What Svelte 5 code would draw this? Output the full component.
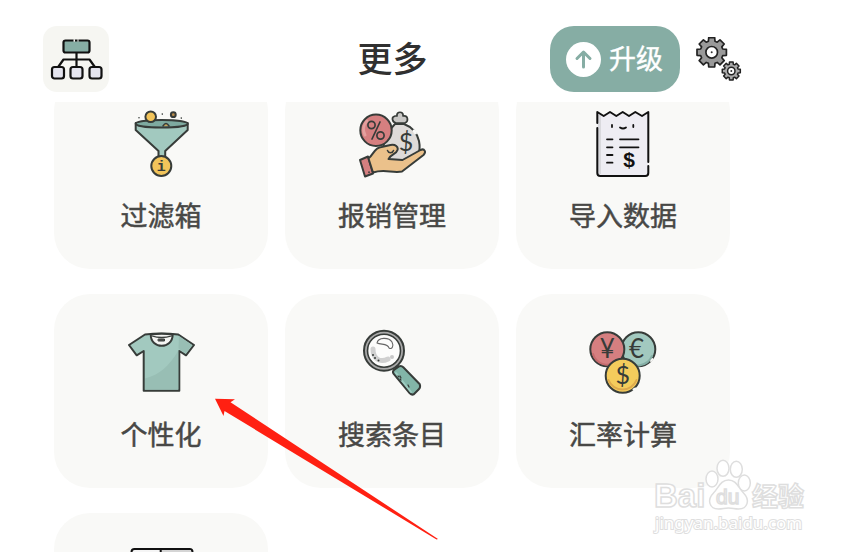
<script>
  // 功能卡片列表
  const items = [
    { icon: 'filter', label: '过滤箱' },
    { icon: 'expense', label: '报销管理' },
    { icon: 'import', label: '导入数据' },
    { icon: 'shirt', label: '个性化' },
    { icon: 'search', label: '搜索条目' },
    { icon: 'rate', label: '汇率计算' },
    { icon: 'book', label: '' },
  ];

  // 生成齿轮轮廓
  function gear(cx, cy, outer, inner) {
    const teeth = 8;
    const step = (Math.PI * 2) / teeth;
    const points = [];
    for (let i = 0; i < teeth; i++) {
      const a = i * step - Math.PI / 2;
      for (const [offset, r] of [[-0.29, inner], [-0.2, outer], [0.2, outer], [0.29, inner]]) {
        points.push(`${(cx + Math.cos(a + offset) * r).toFixed(2)} ${(cy + Math.sin(a + offset) * r).toFixed(2)}`);
      }
    }
    return `M${points.join('L')}Z`;
  }
</script>

<main class="screen">
  <!-- 顶部栏 -->
  <header class="topbar">
    <button class="tree" aria-label="分类">
      <svg viewBox="0 0 66 66" fill="none" stroke="#111" stroke-width="2.2" stroke-linecap="round" stroke-linejoin="round">
        <rect x="20.5" y="14.5" width="26" height="12" rx="2" fill="#86ada4" />
        <path d="M30.5 14.5h1.5M34.5 14.5h1" stroke="#f6f6f2" stroke-width="2.6" stroke-linecap="butt" />
        <path d="M33.5 27v13M15.5 40.5l5-7h26l5 7" />
        <rect x="9" y="41" width="12" height="11.5" rx="2.5" fill="#e4e4ee" />
        <rect x="27.5" y="41" width="12" height="11.5" rx="2.5" fill="#e4e4ee" />
        <rect x="46.5" y="41" width="12" height="11.5" rx="2.5" fill="#e4e4ee" />
      </svg>
    </button>
    <h1>更多</h1>
    <div class="actions">
      <button class="upgrade">
        <svg viewBox="0 0 35 35" fill="none">
          <circle cx="17.5" cy="17.5" r="17.5" fill="#fff" />
          <path d="M17.5 25V10.5M11 16.5l6.5-6.5 6.5 6.5" stroke="#86ada4" stroke-width="3" stroke-linecap="round" stroke-linejoin="round" />
        </svg>
        <span>升级</span>
      </button>
      <button class="settings" aria-label="设置">
        <svg viewBox="0 0 46 44" stroke="#222" stroke-linejoin="round">
          <path d={gear(15.7, 15.3, 15, 11.5)} fill="#999" stroke-width="1.7" />
          <circle cx="15.7" cy="15.3" r="5.8" fill="#fff" stroke-width="1.7" />
          <circle cx="15.7" cy="15.3" r="1" fill="#333" stroke="none" />
          <path d={gear(35.3, 34, 9.2, 7)} fill="#aaa" stroke-width="1.5" />
          <circle cx="35.3" cy="34" r="3.7" fill="#fff" stroke-width="1.5" />
          <circle cx="35.3" cy="34" r="1" fill="#333" stroke="none" />
        </svg>
      </button>
    </div>
  </header>

  <!-- 功能卡片 -->
  <section class="content">
    <div class="grid">
      {#each items as item}
        <button class="card" aria-label={item.label || '账本'}>
          <svg class="icon" viewBox="0 0 68 68" fill="none" stroke="#373c39" stroke-width="2" stroke-linecap="round" stroke-linejoin="round">
            {#if item.icon === 'filter'}
              <path d="M8.7 13v7l22.8 21v6h6.7v-6l22.5-21v-7z" fill="#a2c9bf" />
              <ellipse cx="34.7" cy="13.7" rx="26" ry="3.8" fill="#7eaaa0" />
              <path d="M36 16q3-5 6 0" fill="#c9a75a" stroke-width="1.5" />
              <circle cx="23.7" cy="6.7" r="5.3" fill="#f2c45a" />
              <circle cx="46.3" cy="4.7" r="2.4" fill="#b98c4b" />
              <path d="M12 7.7v.1M35.3 4v.1M54.3 8v.1" stroke-width="1.6" />
              <circle cx="34.3" cy="56" r="10" fill="#f2c45a" />
              <text class="glyph mono" x="34.3" y="61" font-size="15">i</text>
            {:else if item.icon === 'expense'}
              <path d="M38 13c-4-1-5-6-1-7 1 0 1 0 2 0-1-5 7-5 6 0 5-1 6 5 2 7z" fill="#c9c8c6" stroke-width="1.7" />
              <path d="M37 14h9c8 3 13 9 15 17 2 10-1 19-9 22H30c-7-5-8-24 7-39z" fill="#dedbd9" />
              <path d="M56 21l1.5 2" stroke="#f9f9f7" stroke-width="3" />
              <text class="glyph thin" x="48" y="41" font-size="25">$</text>
              <path d="M2 50l8-3.5 5 17-8 3z" fill="#d57f80" />
              <path d="M10.5 48.5c5-4 6-11 13-11.5l9-2c5-1 8 2 7 5-1 4-7 4-9 9l14 1 18-10c4-2 6 2 3 5L44 61.500c-10 2-17-3-29 1z" fill="#ebc18b" />
              <path d="M29.5 40.5c1 3 5 3 6 0" stroke-width="1.5" />
              <path d="M11 62v.5" stroke-width="1.6" />
              <circle cx="18" cy="20.3" r="15.7" fill="#d57f80" />
              <path d="M7 25A12 12 0 0 1 9 11" stroke="#e4a09e" stroke-width="3" />
              <circle cx="13.5" cy="15" r="3.6" stroke-width="1.7" />
              <circle cx="22.5" cy="25.5" r="3.6" stroke-width="1.7" />
              <path d="M22 12l-8 17" stroke-width="1.7" />
            {:else if item.icon === 'import'}
              <path d="M8.3 2l6.4 4L21 2l6.3 4 6.4-4L40 6l6.3-4 6.7 4 6.3-4v61q0 3-3 3h-45q-3 0-3-3z" fill="#eeedf3" stroke="none" />
              <path d="M9 5h3v59h-3z" fill="#d9d9dd" stroke="none" />
              <path d="M8.3 13V2l6.4 4L21 2l6.3 4 6.4-4L40 6l6.3-4 6.7 4 6.3-4v50M59.3 56v7q0 3-3 3h-45q-3 0-3-3V18" stroke="#111" />
              <path d="M23 15v2M44.3 15v2M31 17.5q3 2 6 0M18 29.3h5.5M18 37.3h5.5M18 45h5.5M18 52.7h5.5M31 29.3h18.5M31 37.3h18.5" stroke="#111" stroke-width="1.8" />
              <text class="glyph bold" x="40" y="56.5" font-size="21">$</text>
            {:else if item.icon === 'shirt'}
              <path d="M18 5.5L2 16l7.7 10.3 7-4.3v39.7h35.6V22l6.7 4.300L67 16 51.300 5.500q-17-2-33.300 0z" fill="#a2c9bf" />
              <path d="M18 49.5c15-4 24-12 33.300-28v39H18zM52 7l13 9-6 8.500-7.500-5z" fill="#98beb4" stroke="none" />
              <path d="M23.7 5.5c0 15 22 15 22 0q-11-1.500-22 0z" fill="#f5f5f3" />
              <path d="M25 7q9.5 3 19.5 0" stroke-width="1.3" />
              <rect x="31.5" y="10" width="6" height="2" fill="#555" stroke-width="1" />
            {:else if item.icon === 'search'}
              <path d="M35.5 41l5-4 4 4-5 4z" fill="#999" stroke-width="1.5" />
              <path d="M35.3 44.3q-1-2 1-3.500l5-3.500q2-1 4 1l16.500 17q1 3-1 5l-5 5q-2 1-4-1z" fill="#82b5a8" />
              <path d="M38 44l15 19" stroke="#9dccc0" stroke-width="2" />
              <path d="M40 47l1 1M42 50l1 1M42 47l1 2M50 56l1 2M51 58v.1" stroke-width="1.2" />
              <circle cx="26" cy="21.7" r="20" fill="#aaa" />
              <circle cx="26" cy="21.7" r="16.5" fill="#fcfcfb" stroke-width="1.6" />
              <path d="M15 20c0 10 7 14 15 10" stroke="#d0d0d0" stroke-width="5" />
              <circle cx="34" cy="28" r="2" fill="#c8c8c8" stroke="none" />
              <path d="M15 26v.1M17 29v.1M20.5 31.5v.1" stroke-width="2" />
              <path d="M19 14c1-6 12-6 15-1 2 4 0 8-3 6-1-5-8-3-12-5z" stroke-width="1.1" stroke="#666" />
            {:else if item.icon === 'rate'}
              <circle cx="49.3" cy="20.3" r="17" fill="#a2c9bf" />
              <path d="M37 31a15.500 15.500 0 0 0 26-4" stroke="#84aea5" stroke-width="2" />
              <circle cx="18.3" cy="20.3" r="17" fill="#d57f80" />
              <path d="M4 25a15 15 0 0 0 23 8" stroke="#c56b6d" stroke-width="2" />
              <circle cx="33.7" cy="46.7" r="17" fill="#f4cc5c" />
              <path d="M19.5 51a15 15 0 0 0 28 0" stroke="#dda94c" stroke-width="2" />
              <path d="M62 32l1.500-2M44.500 60.500l2-1" stroke="#f9f9f7" stroke-width="2" />
              <text class="glyph thin" x="18.3" y="29" font-size="26">¥</text>
              <text class="glyph thin" x="47.5" y="29" font-size="26">€</text>
              <text class="glyph thin" x="33.7" y="55" font-size="25">$</text>
            {:else}
              <rect x="4.5" y="1" width="61" height="62" rx="3" fill="#f5f5f5" stroke="#111" />
              <path d="M34 2h30v60H34z" fill="#d5d5d5" stroke="none" />
              <path d="M33.7 1v62" stroke="#111" />
            {/if}
          </svg>
          {#if item.label}
            <span class="label">{item.label}</span>
          {/if}
        </button>
      {/each}
    </div>
  </section>

  <!-- 指向个性化的红色箭头 -->
  <svg class="pointer" viewBox="0 0 223 142" aria-hidden="true">
    <path d="M0 0.7L20 1.3 15.5 4.3 223 141 221.5 141.500 9.500 13 8.500 18z" fill="#ff2012" />
  </svg>

  <!-- 水印 -->
  <svg class="watermark" viewBox="0 0 158 76" aria-hidden="true">
    <text x="2" y="49" font-size="33" font-weight="700">Bai</text>
    <ellipse cx="60" cy="21" rx="6" ry="8" />
    <ellipse cx="71" cy="10.3" rx="6" ry="8" />
    <ellipse cx="84.3" cy="11.3" rx="6" ry="8" />
    <ellipse cx="92.3" cy="25" rx="6" ry="8" />
    <path d="M76.5 22c8 0 10 8 15 13 7 7 4 16-5 16-4 0-6-1-10-1s-6 1-10 1c-9 0-12-9-5-16 5-5 7-13 15-13z" />
    <text x="64" y="46" font-size="21">du</text>
    <text x="100" y="48" font-size="26" font-weight="700">经验</text>
    <text class="url" x="3" y="71" font-size="17">jingyan.baidu.com</text>
  </svg>
</main>

<style>
  :global(body) {
    margin: 0;
    background: #fff;
    font-family: "Noto Sans CJK SC", "Noto Sans", sans-serif;
  }

  .screen {
    position: relative;
    display: flex;
    flex-direction: column;
    height: 100vh;
    overflow: hidden;
  }

  button {
    padding: 0;
    border: none;
    font-family: inherit;
    cursor: pointer;
  }

  svg {
    display: block;
  }

  /* 顶部栏 */
  .topbar {
    display: grid;
    grid-template-columns: 1fr auto 1fr;
    align-items: center;
    padding: 26px 111px 10px 43px;
  }

  .tree {
    width: 66px;
    height: 66px;
    border-radius: 14px;
    background: #f6f6f2;
  }

  h1 {
    margin: 0;
    padding-bottom: 4px;
    color: #303030;
    font-size: 35px;
    font-weight: 500;
    line-height: 40px;
  }

  .actions {
    display: flex;
    justify-content: flex-end;
    align-items: center;
    gap: 16px;
  }

  .upgrade {
    display: flex;
    align-items: center;
    gap: 8px;
    height: 66px;
    padding: 0 17px 0 16px;
    border-radius: 24px;
    background: #86ada4;
    color: #fff;
    font-size: 27px;
    line-height: 32px;
    -webkit-text-stroke: 0.4px #fff;
  }

  .upgrade span {
    padding-bottom: 2px;
  }

  .upgrade svg {
    width: 35px;
    height: 35px;
  }

  .settings {
    background: none;
  }

  .settings svg {
    width: 46px;
    height: 44px;
  }

  /* 卡片区域 */
  .content {
    flex: 1;
    min-height: 0;
    overflow: hidden;
    padding: 0 123px 0 54px;
  }

  .grid {
    display: grid;
    grid-template-columns: repeat(3, 1fr);
    gap: 25px 17px;
    margin-top: -27px;
  }

  .card {
    display: flex;
    flex-direction: column;
    align-items: center;
    gap: 17px;
    min-height: 194px;
    padding: 35px 0 32px;
    border-radius: 36px;
    background: #f9f9f7;
    color: #484846;
  }

  .icon {
    width: 68px;
    height: 68px;
  }

  .label {
    font-size: 27px;
    line-height: 40px;
    -webkit-text-stroke: 0.5px #484846;
  }

  .glyph {
    fill: #373c39;
    stroke: none;
    text-anchor: middle;
    font-family: "Liberation Sans", sans-serif;
  }

  .thin {
    font-family: Lato, sans-serif;
  }

  .mono {
    font-family: "Liberation Mono", monospace;
    font-weight: 700;
  }

  .bold {
    fill: #111;
    font-weight: 700;
  }

  /* 覆盖层 */
  .pointer {
    position: absolute;
    top: 398px;
    left: 215px;
    width: 223px;
    height: 142px;
    pointer-events: none;
  }

  .watermark {
    position: absolute;
    right: 43px;
    bottom: 18px;
    width: 158px;
    height: 76px;
    fill: #fff;
    stroke: #dedede;
    stroke-width: 1.5;
    pointer-events: none;
    font-family: "Liberation Sans", "Noto Sans CJK SC", sans-serif;
  }

  .url {
    stroke-width: 2;
    paint-order: stroke;
    font-family: "Noto Sans", sans-serif;
  }
</style>
